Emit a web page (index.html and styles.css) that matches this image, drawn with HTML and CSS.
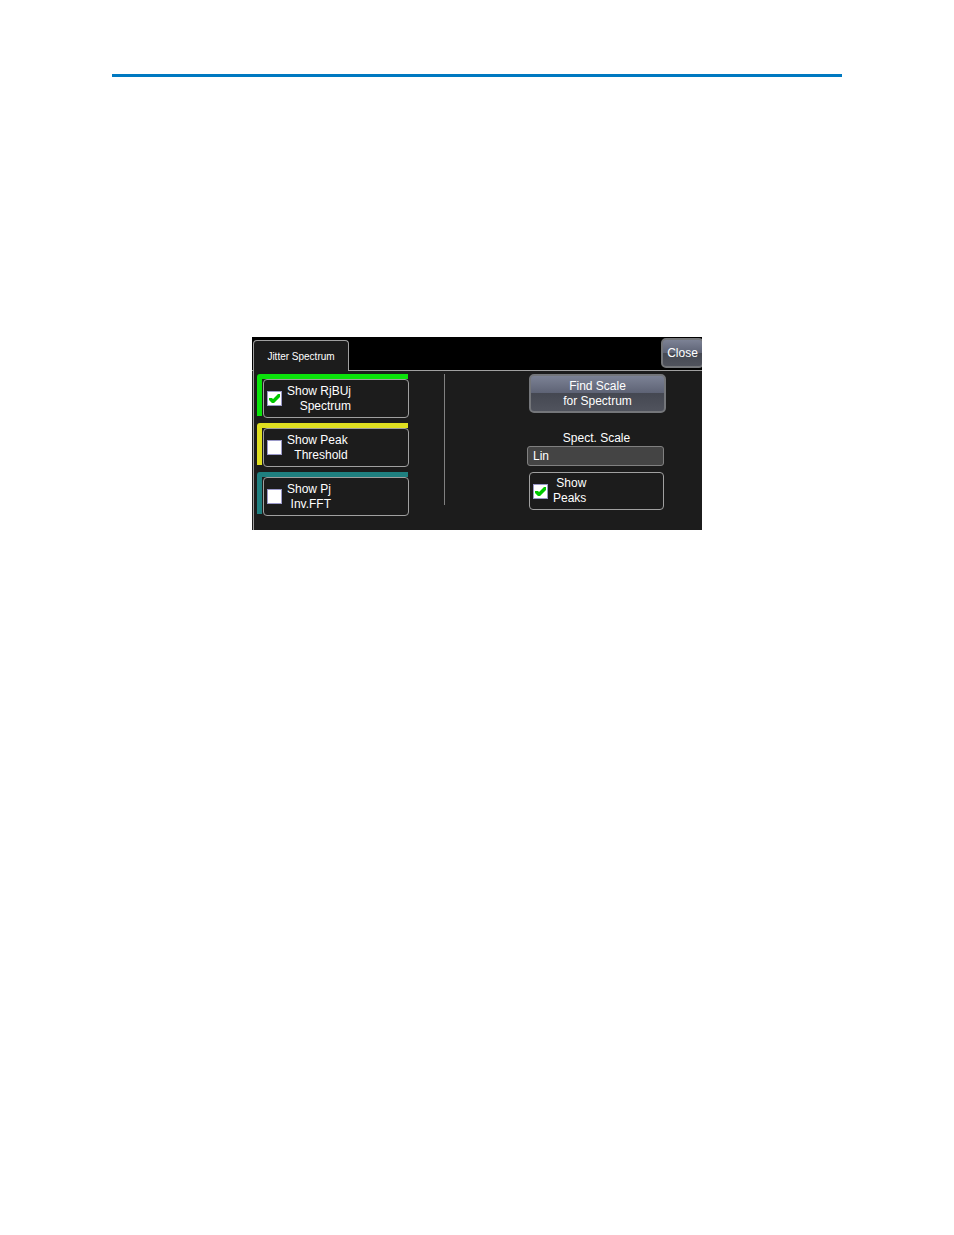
FILE: index.html
```html
<!DOCTYPE html>
<html lang="en">
<head>
    <meta charset="UTF-8">
    <meta name="viewport" content="width=device-width, initial-scale=1.0">
    <title>Jitter Spectrum</title>
    <link rel="stylesheet" href="styles.css">
</head>
<body>
    <hr class="rule">
    <main class="dialog">
        <div class="topbar">
            <button class="tab" type="button">Jitter Spectrum</button>
            <button class="btn close" type="button">Close</button>
        </div>
        <div class="panel">
            <div class="traces">
                <div class="trace green">
                    <label class="check">
                        <input type="checkbox" checked>
                        <span>Show RjBUj<br>Spectrum</span>
                    </label>
                </div>
                <div class="trace yellow">
                    <label class="check">
                        <input type="checkbox">
                        <span>Show Peak<br>Threshold</span>
                    </label>
                </div>
                <div class="trace teal">
                    <label class="check">
                        <input type="checkbox">
                        <span>Show Pj<br>Inv.FFT</span>
                    </label>
                </div>
            </div>
            <div class="divider"></div>
            <div class="settings">
                <button class="btn find" type="button">Find Scale<br>for Spectrum</button>
                <label class="scale-label" for="scale">Spect. Scale</label>
                <select class="scale" id="scale">
                    <option>Lin</option>
                </select>
                <label class="check peaks">
                    <input type="checkbox" checked>
                    <span>Show<br>Peaks</span>
                </label>
            </div>
        </div>
    </main>
</body>
</html>
```
FILE: styles.css
```css
* { box-sizing: border-box; }
body { margin: 0; padding: 74px 112px; background: #fff; font-family: "Liberation Sans", Arial, sans-serif; font-size: 12px; line-height: 15px; }
button, select { font: inherit; color: #fff; }

.rule { height: 3px; margin: 0 0 260px; border: 0; background: #0079c1; }

.dialog { width: 450px; max-width: 100%; margin: 0 auto; overflow: hidden; background: #1c1c1c; color: #fff; }

/* tab strip */
.topbar { display: flex; justify-content: space-between; align-items: flex-end; height: 34px; padding-left: 1px; background: linear-gradient(#a0a0a0, #a0a0a0) bottom / 100% 1px no-repeat #000; }
.tab { width: 96px; height: 31px; padding: 0; border: 1px solid #a0a0a0; border-bottom: 0; border-radius: 4px 4px 0 0; background: #1c1c1c; font-size: 10px; }
.btn { padding: 0; border: 2px solid #74767a; border-radius: 5px; background: linear-gradient(#7c8295, #5d6274 50%, #454852 50%, #50535d); }
.close { width: 43px; height: 30px; margin: 0 -2px 3px 0; }

/* panel under the tab */
.panel { display: flex; margin-left: 1px; padding: 3px 36px 14px 3px; border-left: 1px solid #a0a0a0; }
.traces { display: flex; flex-direction: column; gap: 5px; width: 152px; }
.trace { height: 44px; padding: 5px 0 0 6px; border-top-left-radius: 3px; background: linear-gradient(var(--trace), var(--trace)) 0 0 / calc(100% - 1px) 5px no-repeat, linear-gradient(var(--trace), var(--trace)) 0 0 / 5px calc(100% - 2px) no-repeat; }
.green { --trace: #0be30b; }
.yellow { --trace: #dfdf20; }
.teal { --trace: #1f8080; }

.check { display: flex; align-items: center; gap: 5px; height: 39px; padding-left: 3px; border: 1px solid #a0a0a0; border-radius: 4px; text-align: right; }
.check input { appearance: none; width: 15px; height: 15px; margin: 0; border: 1px solid #9a98c8; background: #fff; }
.check input:checked { background: #fff url("data:image/svg+xml,%3Csvg xmlns='http://www.w3.org/2000/svg' viewBox='0 0 13 13'%3E%3Cpath d='M1 6h3l1 1 5-5h2v3l-6 6H4L1 8z' fill='%2300c800'/%3E%3C/svg%3E") center / 13px 13px no-repeat; }

.divider { width: 1px; height: 131px; margin-left: 35px; background: #808080; }

.settings { display: flex; flex-direction: column; width: 139px; margin-left: auto; }
.find { height: 39px; margin-left: 2px; }
.scale-label { margin-top: 18px; text-align: center; }
.scale { appearance: none; height: 20px; margin-right: 2px; padding: 0 5px; border: 1px solid #808080; border-radius: 3px; background: #444; }
.peaks { height: 38px; margin: 6px 2px 0; }
```
